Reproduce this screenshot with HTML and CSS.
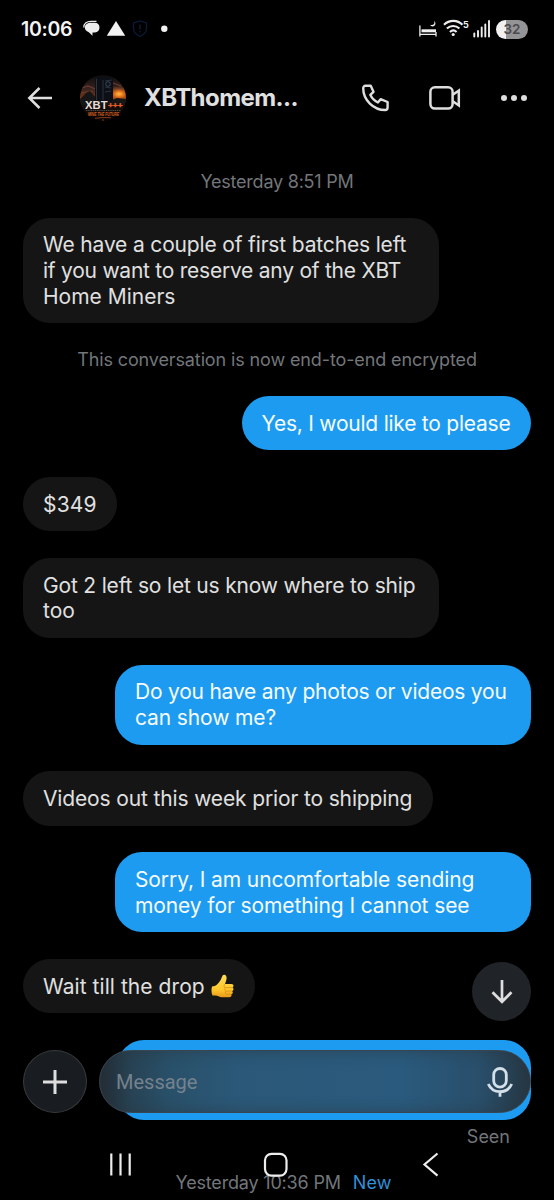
FILE: index.html
```html
<!DOCTYPE html>
<html lang="en">
<head>
<meta charset="utf-8">
<title>Conversation</title>
<link rel="stylesheet" href="styles.css">
</head>
<body>
<div class="phone">
  <div class="status">
    <span class="clock">10:06</span>
    <svg class="status-left" width="90" height="20" viewBox="0 0 90 20">
      <path d="M.8 8.500C.6 4.500 3.500 2.400 8 2.400h5.500" fill="none" stroke="#eee" stroke-width="1.200"/>
      <path d="M8 3.800h3.500c3.200 0 5 1.900 5 4.700s-1.800 4.700-4.500 4.900H9.500v3.400L5.500 13C3.300 12.300 1.800 10.800 1.800 8.500c0-2.800 2.700-4.700 6.200-4.700z" fill="#eee"/>
      <path d="M33 2l9.200 14.800H23.800z" fill="#f2f2f2"/>
      <path d="M57 2l6.500 2v6c0 3.500-3 5.800-6.500 7.500-3.500-1.700-6.500-4-6.500-7.500V4z" fill="none" stroke="#0b1c38" stroke-width="1.300"/>
      <path d="M57 5.500v5M57 12v1.600" stroke="#0b1c38" stroke-width="1.500"/>
      <circle cx="81.300" cy="9.800" r="3.200" fill="#f2f2f2"/>
    </svg>
    <svg class="status-right" width="72" height="20" viewBox="0 0 72 20">
      <g fill="none" stroke="#eee" stroke-width="1.300">
        <path d="M.9 6.500v11M.9 15.300h16.500M17 13v4.500"/>
        <path d="M2.500 11.800h14.500" stroke-width="3"/>
      </g>
      <path d="M15.200 2c1 3-1.200 4.800-4 3.800.8 2.300 4.800 2.200 5.200-1 .1-1.200-.3-2.200-1.200-2.800z" fill="#eee"/>
      <g fill="none" stroke="#eee" stroke-width="2.100">
        <path d="M25 5.800c5.200-5.200 13.500-5.200 18.500 0M27.900 9.600c3.600-3.500 9-3.500 12.500 0M30.900 13c2-1.800 4.800-1.800 6.700 0"/>
      </g>
      <circle cx="34.200" cy="15.500" r="1.600" fill="#eee"/>
      <path d="M55.300 14.500v3M59 12v5.500M62.700 8.500v9M66.300 5.500v12M70 2v15.500" stroke="#eee" stroke-width="1.900" stroke-linecap="round"/>
      <text class="wifi-gen" x="44" y="8.500">5</text>
    </svg>
    <span class="battery">32</span>
  </div>

  <header class="header">
    <svg class="back" width="26" height="22" viewBox="0 0 26 22" fill="none" stroke="#dedede" stroke-width="2.500"><path d="M25 11H3M12.500 1L2.300 11l10.200 10"/></svg>
    <svg class="avatar" width="46" height="46" viewBox="0 0 46 46">
      <defs>
        <clipPath id="round"><circle cx="23" cy="23" r="23"/></clipPath>
        <linearGradient id="sky" x1="0" y1="0" x2="0" y2="1"><stop offset="0" stop-color="#0b0c0e"/><stop offset=".3" stop-color="#38231e"/><stop offset=".5" stop-color="#7c3517"/><stop offset=".62" stop-color="#1b100c"/><stop offset="1" stop-color="#080605"/></linearGradient>
        <radialGradient id="sun"><stop offset="0" stop-color="#ffc04a"/><stop offset=".3" stop-color="#ee7d1d"/><stop offset="1" stop-color="#b04a12" stop-opacity="0"/></radialGradient>
      </defs>
      <g clip-path="url(#round)">
        <rect width="46" height="46" fill="url(#sky)"/>
        <ellipse cx="39" cy="19" rx="13" ry="8" fill="url(#sun)"/>
        <path d="M2 13l6-2 7 3M1 18l12-2M33 8l8 3M34 13l9 1" stroke="#6a3c31" stroke-width="1.200" fill="none"/>
        <path d="M0 24l6-6 4-2 6 7 16 2 5-2 9 1v6H0z" fill="#171617"/>
        <path d="M15 3l9-2 9 3v22l-10 2-8-2z" fill="#0c0f15"/>
        <path d="M16.500 4v21M23 5v20M25 6l7-1M25 12l6 1M25 17l6-1" stroke="#333c49" stroke-width=".8"/>
        <circle cx="28" cy="9" r="2.300" fill="none" stroke="#3a4a5e"/>
        <path d="M6 35.500h35" stroke="#77706b" stroke-width=".6" stroke-dasharray="1.500 .7"/>
        <path d="M15 43.300l8-.8 8 .2M23 44v2" stroke="#b55122" stroke-width=".7" fill="none"/>
      </g>
      <text class="logo-name" x="5" y="33.800" textLength="22.500" lengthAdjust="spacingAndGlyphs">XBT</text>
      <text class="logo-plus" x="28" y="33" textLength="14.500" lengthAdjust="spacingAndGlyphs">+++</text>
      <text class="logo-tag" x="8" y="41" textLength="31" lengthAdjust="spacingAndGlyphs">MINE THE FUTURE</text>
    </svg>
    <h1 class="title">XBThomem...</h1>
    <svg class="call" width="30" height="30" viewBox="0 0 30 30" fill="none" stroke="#dedede" stroke-width="2.400" stroke-linejoin="round"><path d="M4.500 2.800h5.200l2.800 6-3.200 3c1.700 3.600 4 6 7.600 7.700l2.700-3.300 7 2.800v5.600c0 1.500-.9 2.400-2.400 2.400C12.600 27 2.200 17 2.200 5.200c0-1.300.9-2.400 2.300-2.400z"/></svg>
    <svg class="video" width="32" height="26" viewBox="0 0 32 26" fill="none" stroke="#dedede" stroke-width="2.500"><rect x="1.400" y="2.300" width="22.200" height="21.300" rx="4.500"/><path d="M23.800 9.800l6-4.200v14.800l-6-4.200"/></svg>
    <svg class="more" width="28" height="8" viewBox="0 0 28 8" fill="#dedede"><circle cx="4" cy="4" r="3"/><circle cx="14" cy="4" r="3"/><circle cx="24" cy="4" r="3"/></svg>
  </header>

  <main class="chat">
    <p class="note day">Yesterday 8:51 PM</p>
    <div class="bubble in m1"><span class="a">We have a couple of first batches left</span><span class="b">if you want to reserve any of the XBT</span><span class="c">Home Miners</span></div>
    <p class="note secure">This conversation is now end-to-end encrypted</p>
    <div class="bubble out m2"><span>Yes, I would like to please</span></div>
    <div class="bubble in m3"><span>$349</span></div>
    <div class="bubble in m4"><span class="a">Got 2 left so let us know where to ship</span><span class="b">too</span></div>
    <div class="bubble out m5"><span class="a">Do you have any photos or videos you</span><span class="b">can show me?</span></div>
    <div class="bubble in m6"><span>Videos out this week prior to shipping</span></div>
    <div class="bubble out m7"><span class="a">Sorry, I am uncomfortable sending</span><span class="b">money for something I cannot see</span></div>
    <div class="bubble in m8"><span>Wait till the drop</span>
      <svg class="thumb" width="23" height="24" viewBox="0 0 23 24">
        <defs><linearGradient id="skin" x1="0" y1="0" x2="0" y2="1"><stop offset="0" stop-color="#ffdc55"/><stop offset=".65" stop-color="#ffc72e"/><stop offset="1" stop-color="#e99a18"/></linearGradient></defs>
        <path d="M1 12.500c4 0 6-2.500 8.500-6.200C11 4 11 1 13 .8c2.600-.2 3.200 3 2 6.200l-1 3h6.500c2.400 0 2.600 3 .8 3.600 1.800.8 1.400 3.200-.2 3.500 1.200.9.700 3-.8 3.200.7 1.300-.2 2.900-2.100 2.900H11c-3 0-4-1.700-7-1.700H1.500C.3 19 .2 15.500 1 12.500z" fill="url(#skin)"/>
        <path d="M14 10c-1.300.7-1.300 3 0 3.600h7M14.500 13.700c-1.200 1-.8 3 .3 3.400h6M15 17.200c-1 .9-.7 2.700.3 3h4.500" fill="none" stroke="#d48816" stroke-width=".7"/>
      </svg>
    </div>
    <div class="bubble out m9"></div>
    <p class="seen">Seen</p>
    <p class="note next"><span class="when">Yesterday 10:36 PM</span><span class="new">New</span></p>
  </main>

  <button class="jump" aria-label="Jump to latest"><svg width="22" height="26" viewBox="0 0 22 26" fill="none" stroke="#dedede" stroke-width="2.700"><path d="M11 1v22M1.500 13.200l9.500 9.600 9.500-9.600"/></svg></button>

  <div class="composer">
    <button class="add" aria-label="Add"><svg width="24" height="24" viewBox="0 0 24 24" stroke="#dedede" stroke-width="3"><path d="M12 0v24M0 12h24"/></svg></button>
    <div class="field">
      <span>Message</span>
      <svg width="26" height="30" viewBox="0 0 26 30" fill="none" stroke="#d3dfe9" stroke-width="2.800"><rect x="6.700" y="1.500" width="12.600" height="18.600" rx="6.300"/><path d="M1.300 17c2 4.600 6.600 7.700 11.700 7.700S22.700 21.600 24.700 17M13 24.700v5"/></svg>
    </div>
  </div>

  <nav class="nav">
    <svg width="320" height="26" viewBox="0 0 320 26" fill="none" stroke="#ededed" stroke-width="2.200"><path d="M2.300 2.500v22M11.500 2.500v22M20.700 2.500v22"/><rect x="156" y="2.800" width="21.500" height="21.800" rx="6.500"/><path d="M328.500 2.500L315.500 13.500l13 11.200"/></svg>
  </nav>
</div>
</body>
</html>
```
FILE: styles.css
```css
* { box-sizing: border-box; }
body { margin: 0; background: #000; }
p, h1 { margin: 0; }
button { padding: 0; border: 0; }
svg { display: block; flex: none; }
.phone {
  position: relative;
  width: 554px;
  height: 1200px;
  overflow: hidden;
  background: #000;
  color: #e0e0e0;
  font-family: Inter, "Liberation Sans", sans-serif;
}
.status { display: flex; height: 58px; padding: 0 26px 0 21px; align-items: center; }
.clock { width: 62px; font: 600 19.500px/24px Inter, sans-serif; letter-spacing: -.3px; color: #f4f4f4; white-space: nowrap; }
.status-left { width: 90px; }
.status-right { margin-left: auto; }
.wifi-gen { font: 700 9px Inter, sans-serif; fill: #eee; }
.battery {
  width: 32px;
  height: 19px;
  margin-left: 5px;
  border-radius: 10px;
  background: linear-gradient(90deg, #f1f1f1 32%, #949496 32%);
  color: #4b4b4d;
  font: 600 13.500px/19px Inter, sans-serif;
  text-align: center;
}
.header { display: flex; height: 79px; padding-left: 27px; align-items: center; }
.avatar { margin-left: 27px; overflow: visible; }
.title { width: 200px; margin-left: 18px; font-size: 24px; font-weight: 700; line-height: 30px; letter-spacing: -.55px; white-space: nowrap; }
.call { margin-left: 17px; }
.video { margin-left: 37.500px; }
.more { margin-left: 39.500px; }
.logo-name { font: 700 10.500px "Liberation Sans", sans-serif; fill: #e5ddd8; }
.logo-plus { font: 700 8px "Liberation Sans", sans-serif; fill: #e55b27; stroke: #e55b27; stroke-width: .4px; }
.logo-tag { font: italic 700 5.500px "Liberation Sans", sans-serif; fill: #d76020; }

.chat { display: flex; flex-direction: column; padding: 33.500px 23px 0; }
.note { font-size: 18px; line-height: 22px; color: #72767a; text-align: center; white-space: nowrap; }
.day { margin-bottom: 25px; letter-spacing: -.23px; }
.secure { margin: -1px 0 25px; letter-spacing: -.12px; }
.bubble {
  display: flex;
  flex-direction: column;
  width: 416px;
  margin-bottom: 26.700px;
  padding: 14.800px 20px 13.800px;
  border-radius: 27px;
  background: #151515;
  font-size: 21px;
  line-height: 25.700px;
  white-space: nowrap;
}
.bubble span { align-self: flex-start; }
.out { align-self: flex-end; background: #1d9bf0; color: #f6fbff; }
.m1 .a { letter-spacing: -.16px; }
.m1 .b { letter-spacing: -.24px; }
.m2 { width: 289.500px; letter-spacing: -.23px; }
.m3 { width: 94px; letter-spacing: .2px; }
.m4 .a { letter-spacing: -.18px; }
.m5 .a { letter-spacing: -.22px; }
.m5 .b { letter-spacing: -.12px; }
.m6 { width: 410px; letter-spacing: -.14px; }
.m7 { letter-spacing: -.1px; }
.m8 { flex-direction: row; width: 232px; letter-spacing: .06px; }
.thumb { margin: 0 0 0 6px; }
.m9 { width: 414px; height: 80px; margin-bottom: 0; }
.seen { padding: 6px 21px 0 0; font-size: 18px; line-height: 22px; color: #72767a; text-align: right; }
.next { display: flex; margin-top: 24px; padding-left: 152.500px; gap: 12px; letter-spacing: -.18px; }
.new { color: #2f8fd8; letter-spacing: .1px; }

.jump { position: absolute; left: 472px; top: 962px; display: grid; width: 59px; height: 59px; place-items: center; border-radius: 50%; background: #202327; }
.composer { position: absolute; left: 23px; top: 1050px; display: flex; width: 508px; height: 63px; gap: 12px; }
.add { display: grid; flex: none; width: 64px; height: 63px; place-items: center; border: 1px solid #383a3c; border-radius: 50%; background: #191d21; }
.field {
  display: flex;
  flex: 1;
  padding: 0 17px 0 16px;
  align-items: center;
  justify-content: space-between;
  border: 1px solid #3a454d;
  border-radius: 32px;
  background: linear-gradient(90deg, #222c34 0, #284253 7%, #295069 16%, #2b5878 32%, #2a5a7d 70%, #294f6b 88%, #263743 100%);
  box-shadow: inset 0 0 14px #28353e90;
  color: #75828e;
  font: 20px/26px Roboto, sans-serif;
}
.nav { position: absolute; left: 109px; top: 1151px; }
.nav svg { overflow: visible; }
```
